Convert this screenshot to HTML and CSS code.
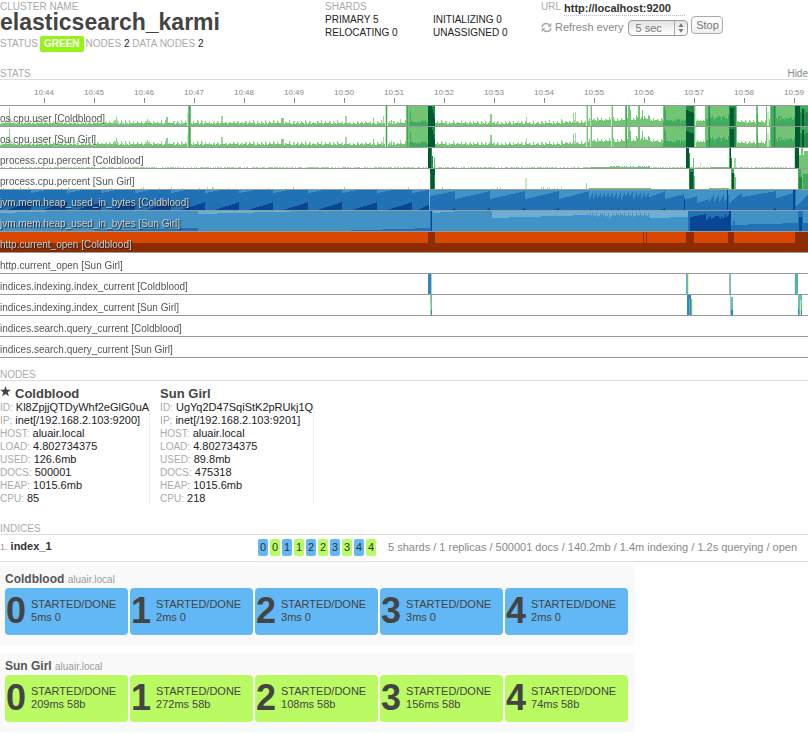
FILE: index.html
```html
<!DOCTYPE html>
<html lang="en">
<head>
<meta charset="utf-8">
<title>elasticsearch_karmi</title>
<link rel="stylesheet" href="styles.css">
</head>
<body>
<header class="top">
  <div class="cluster">
    <p class="label">CLUSTER NAME</p>
    <h1>elasticsearch_karmi</h1>
    <p class="status label"><span>STATUS</span><strong class="pill">GREEN</strong><span>NODES <b>2</b> DATA NODES <b>2</b></span></p>
  </div>
  <div class="shard-summary">
    <p class="label">SHARDS</p>
    <ul class="counts">
      <li>PRIMARY 5</li><li>INITIALIZING 0</li>
      <li>RELOCATING 0</li><li>UNASSIGNED 0</li>
    </ul>
  </div>
  <form class="controls">
    <div class="url"><label for="url" class="label">URL</label><input id="url" type="text" value="http://localhost:9200"></div>
    <div class="refresh">
      <svg class="refresh-icon" viewBox="0 0 11 11" aria-hidden="true"><path d="M1.2 5.2C1.5 2.8 3.2 1.5 5.3 1.5c1.300 0 2.300.5 3 1.300M9.800 5.800C9.500 8.200 7.800 9.500 5.700 9.500c-1.300 0-2.300-.5-3-1.300" fill="none" stroke="#aaa" stroke-width="1.500"/><path d="M10.300.8v3.900H6.400zM.7 10.200V6.300h3.900z" fill="#aaa"/></svg>
      <label for="every">Refresh every</label>
      <span class="select"><select id="every"><option>5 sec</option><option>10 sec</option><option>30 sec</option></select><svg viewBox="0 0 13 14" aria-hidden="true"><path d="M.5 0v14" stroke="#aaa"/><path d="M4.500 6 7 2.200 9.500 6zM4.500 8 7 11.800 9.500 8z" fill="#777"/></svg></span>
      <button type="button">Stop</button>
    </div>
  </form>
</header>

<section class="stats">
  <div class="bar"><h2>STATS</h2><a href="#stats">Hide</a></div>
  <div class="chart" id="stats">
    <ol class="axis">
      <li>10:44</li><li>10:45</li><li>10:46</li><li>10:47</li><li>10:48</li><li>10:49</li><li>10:50</li><li>10:51</li><li>10:52</li><li>10:53</li><li>10:54</li><li>10:55</li><li>10:56</li><li>10:57</li><li>10:58</li><li>10:59</li>
    </ol>
    <div class="horizon"><canvas width="808" height="20" data-metric="cpu"></canvas><span>os.cpu.user [Coldblood]</span></div>
    <div class="horizon"><canvas width="808" height="20" data-metric="cpu"></canvas><span>os.cpu.user [Sun Girl]</span></div>
    <div class="horizon"><canvas width="808" height="20" data-metric="process1"></canvas><span>process.cpu.percent [Coldblood]</span></div>
    <div class="horizon"><canvas width="808" height="20" data-metric="process2"></canvas><span>process.cpu.percent [Sun Girl]</span></div>
    <div class="horizon inverse"><canvas width="808" height="20" data-metric="heap1"></canvas><span>jvm.mem.heap_used_in_bytes [Coldblood]</span></div>
    <div class="horizon inverse"><canvas width="808" height="20" data-metric="heap2"></canvas><span>jvm.mem.heap_used_in_bytes [Sun Girl]</span></div>
    <div class="horizon inverse"><canvas width="808" height="20" data-metric="http"></canvas><span>http.current_open [Coldblood]</span></div>
    <div class="horizon"><canvas width="808" height="20"></canvas><span>http.current_open [Sun Girl]</span></div>
    <div class="horizon"><canvas width="808" height="20" data-metric="indexing1"></canvas><span>indices.indexing.index_current [Coldblood]</span></div>
    <div class="horizon"><canvas width="808" height="20" data-metric="indexing2"></canvas><span>indices.indexing.index_current [Sun Girl]</span></div>
    <div class="horizon"><canvas width="808" height="20"></canvas><span>indices.search.query_current [Coldblood]</span></div>
    <div class="horizon"><canvas width="808" height="20"></canvas><span>indices.search.query_current [Sun Girl]</span></div>
  </div>
</section>

<section class="nodes">
  <div class="bar"><h2>NODES</h2></div>
  <div class="node-list">
    <article class="node">
      <h3><svg class="star" viewBox="0 0 11 11" aria-hidden="true"><path d="M5.500 0 6.800 3.800H11L7.700 6.300 8.900 10.300 5.500 7.900 2.100 10.300 3.300 6.300 0 3.800H4.200z" fill="#444"/></svg>Coldblood</h3>
      <dl>
        <div><dt>ID:</dt> <dd>Kl8ZpjjQTDyWhf2eGlG0uA</dd></div>
        <div><dt>IP:</dt> <dd>inet[/192.168.2.103:9200]</dd></div>
        <div><dt>HOST:</dt> <dd>aluair.local</dd></div>
        <div><dt>LOAD:</dt> <dd>4.802734375</dd></div>
        <div><dt>USED:</dt> <dd>126.6mb</dd></div>
        <div><dt>DOCS:</dt> <dd>500001</dd></div>
        <div><dt>HEAP:</dt> <dd>1015.6mb</dd></div>
        <div><dt>CPU:</dt> <dd>85</dd></div>
      </dl>
    </article>
    <article class="node">
      <h3>Sun Girl</h3>
      <dl>
        <div><dt>ID:</dt> <dd>UgYq2D47SqiStK2pRUkj1Q</dd></div>
        <div><dt>IP:</dt> <dd>inet[/192.168.2.103:9201]</dd></div>
        <div><dt>HOST:</dt> <dd>aluair.local</dd></div>
        <div><dt>LOAD:</dt> <dd>4.802734375</dd></div>
        <div><dt>USED:</dt> <dd>89.8mb</dd></div>
        <div><dt>DOCS:</dt> <dd>475318</dd></div>
        <div><dt>HEAP:</dt> <dd>1015.6mb</dd></div>
        <div><dt>CPU:</dt> <dd>218</dd></div>
      </dl>
    </article>
  </div>
</section>

<section class="indices">
  <div class="bar"><h2>INDICES</h2></div>
  <div class="index">
    <h3><small>1.</small> index_1</h3>
    <ul class="mini">
      <li class="blue">0</li><li class="green">0</li><li class="blue">1</li><li class="green">1</li><li class="blue">2</li><li class="green">2</li><li class="blue">3</li><li class="green">3</li><li class="blue">4</li><li class="green">4</li>
    </ul>
    <p>5 shards / 1 replicas / 500001 docs / 140.2mb / 1.4m indexing / 1.2s querying / open</p>
  </div>
  <div class="panel">
    <h4>Coldblood <small>aluair.local</small></h4>
    <ul class="cards">
      <li class="blue"><b>0</b><p>STARTED/DONE<br>5ms 0</p></li>
      <li class="blue"><b>1</b><p>STARTED/DONE<br>2ms 0</p></li>
      <li class="blue"><b>2</b><p>STARTED/DONE<br>3ms 0</p></li>
      <li class="blue"><b>3</b><p>STARTED/DONE<br>3ms 0</p></li>
      <li class="blue"><b>4</b><p>STARTED/DONE<br>2ms 0</p></li>
    </ul>
  </div>
  <div class="panel">
    <h4>Sun Girl <small>aluair.local</small></h4>
    <ul class="cards">
      <li class="green"><b>0</b><p>STARTED/DONE<br>209ms 58b</p></li>
      <li class="green"><b>1</b><p>STARTED/DONE<br>272ms 58b</p></li>
      <li class="green"><b>2</b><p>STARTED/DONE<br>108ms 58b</p></li>
      <li class="green"><b>3</b><p>STARTED/DONE<br>156ms 58b</p></li>
      <li class="green"><b>4</b><p>STARTED/DONE<br>74ms 58b</p></li>
    </ul>
  </div>
</section>
<script src="charts.js"></script>
</body>
</html>
```
FILE: styles.css
```css
* { box-sizing: border-box; margin: 0; padding: 0; }
body {
  font: 11px/13px "Liberation Sans", Arial, sans-serif;
  color: #222;
  background: #fff;
  overflow-x: hidden;
}
ul, ol { list-style: none; }
.label { font-size: 10px; color: #aaa; }

.top {
  display: grid;
  grid-template-columns: 325fr 216fr 267fr;
  height: 52px;
}
h1 { font-size: 23px; line-height: 18px; color: #444; }
.status { display: flex; gap: 2px; margin-top: 5px; line-height: 16px; }
.status b { font-weight: normal; color: #222; }
.pill { padding: 0 4px; border-radius: 2px; background: #97f218; color: #fff; }
.counts { display: grid; grid-template-columns: 1fr 1fr; font-size: 10px; }

.url { display: flex; gap: 3px; height: 16px; }
.url input {
  width: 121px;
  border: 0;
  border-bottom: 1px dotted #bbb;
  background: none;
  font: bold 11px/14px "Liberation Sans", Arial, sans-serif;
  color: #333;
}
.refresh { display: flex; align-items: flex-start; color: #888; }
.refresh-icon { width: 11px; height: 11px; margin: 6px 3px 0 0; }
.refresh label { margin: 5px 5px 0 0; }
.select {
  display: flex;
  width: 60px;
  height: 16px;
  margin: 4px 3px 0 0;
  border: 1px solid #999;
  border-radius: 4px;
  background: linear-gradient(#e2e2e2, #fff);
}
.select select {
  flex: 1;
  min-width: 0;
  padding-left: 6px;
  border: 0;
  background: none;
  appearance: none;
  font: 11px/13px "Liberation Sans", Arial, sans-serif;
  color: #777;
}
.select svg { width: 13px; height: 14px; }
.refresh button {
  width: 32px;
  height: 18px;
  padding-top: 1px;
  border: 1px solid #aaa;
  border-radius: 4px;
  background: linear-gradient(#fff, #f0f0f0);
  font: 11px/13px "Liberation Sans", Arial, sans-serif;
  color: #777;
}

.bar {
  display: flex;
  justify-content: space-between;
  height: 13px;
  border-bottom: 1px solid #ddd;
  line-height: 14px;
}
.bar h2, .bar a { font-size: 10px; font-weight: normal; color: #aaa; text-decoration: none; }
.bar a { color: #888; }
.stats { margin-top: 15px; }
.chart { overflow: hidden; }
.axis {
  display: grid;
  grid-template-columns: repeat(16, 1fr);
  height: 25px;
  margin: 0 -11px 0 19px;
  padding-top: 8px;
  font-size: 8px;
  line-height: 10px;
  text-align: center;
  color: #888;
}
.axis li::after { content: ""; display: block; width: 1px; height: 5px; margin: 0 auto; background: #888; }
.horizon { position: relative; height: 21px; border-top: 1px solid #999; }
.horizon:last-child { height: 22px; border-bottom: 1px solid #999; }
.horizon canvas { display: block; width: 100%; height: 20px; image-rendering: pixelated; }
.horizon span {
  position: absolute;
  left: 0;
  top: 6px;
  font-size: 10px;
  color: #555;
  text-shadow: 0 1px 0 rgba(255, 255, 255, .5);
}
.horizon.inverse span { color: #ccc; text-shadow: 1px 1px 1px #222; }

.nodes { margin-top: 10px; }
.node-list { display: flex; gap: 10px; padding-top: 5px; }
.node h3 { display: flex; gap: 4px; height: 15px; font-size: 13px; line-height: 15px; color: #444; }
.star { width: 11px; height: 11px; }
.node dl { min-width: 150px; border-right: 1px solid #eee; }
.node dt, .node dd { display: inline; }
.node dt { font-size: 10px; color: #aaa; }

.indices { margin-top: 17px; }
.index {
  display: grid;
  grid-template-columns: 258fr 130fr 420fr;
  align-items: center;
  height: 27px;
  padding-bottom: 2px;
  margin-bottom: 4px;
  border-bottom: 1px solid #ddd;
  white-space: nowrap;
}
.index h3 { font-size: 11px; color: #333; }
.index small { font-size: 9px; font-weight: normal; color: #999; }
.index p { color: #888; }
.mini { display: flex; gap: 2px; }
.mini li { width: 10px; border-radius: 2px; line-height: 17px; text-align: center; color: #333; }
.blue { background: #62b7f5; }
.green { background: #bafa62; }
.panel { max-width: 635px; padding: 5px 7px 10px 5px; border-radius: 4px; background: #f9f9f9; }
.panel + .panel { margin-top: 8px; }
.panel h4 { font-size: 12px; line-height: 17px; color: #555; }
.panel small { font-size: 10px; font-weight: normal; color: #999; }
.cards { display: grid; grid-template-columns: repeat(5, 1fr); gap: 2px; }
.cards li { display: flex; align-items: center; gap: 5px; height: 47px; padding: 0 0 2px 1px; border-radius: 4px; color: #444; }
.cards b { font-size: 36px; line-height: 45px; }
```
FILE: charts.js
```js
const GREEN = { pale: '#c7e9c0', light: '#74c476', mid: '#41ab5d', dark: '#238b45', deep: '#005a32' };
const BLUE = { pale: '#6baed6', light: '#4292c6', mid: '#2171b5', deep: '#084594' };
const H = 20;

// Repeatable pseudo-random sequence, 0..1.
function sequence(seed) {
  return () => (seed = (seed * 16807) % 2147483647) / 2147483647;
}

// Filled column group standing on the base line.
function rise(c, x, w, h, color) {
  c.fillStyle = color;
  c.fillRect(x, H - h, w, h);
}

// Straight-edged area between two x values, measured from base or top.
function area(c, x0, h0, x1, h1, color, top) {
  c.fillStyle = color;
  for (let x = x0; x < x1; x++) {
    const h = Math.round(h0 + (h1 - h0) * (x - x0) / (x1 - x0));
    c.fillRect(x, top ? 0 : H - h, 1, h);
  }
}

function noise(c, x0, x1, base, spread, color, rnd) {
  c.fillStyle = color;
  for (let x = x0; x < x1; x++) {
    const h = Math.round(base + spread * rnd());
    c.fillRect(x, H - h, 1, h);
  }
}

const draw = {
  cpu(c) {
    const r = sequence(77);
    for (let x = 0; x < 808; x++) {
      const busy = x > 585 && x < 663 ? 3 : x > 560 ? 1 : 0;
      if (x % 4 === 1) rise(c, x, 1, 4 + busy + Math.round(r() * 2), '#8bce8b');
      if (x % 4 === 2) rise(c, x, 1, 3 + busy + Math.round(r() * 2), '#b4e0b0');
      rise(c, x, 1, 2 + busy + Math.round(r() * 1.3), GREEN.light);
    }
    [[9, 1, 18], [8, 3, 8], [116, 1, 9], [114, 4, 6], [147, 1, 7], [145, 5, 5], [166, 2, 9], [221, 2, 10],
      [281, 3, 8], [345, 2, 10], [373, 1, 8], [383, 1, 10], [391, 1, 6], [400, 1, 7], [490, 2, 12], [526, 1, 9],
      [573, 1, 13], [575, 1, 14]].forEach(([x, w, h], i) => {
      rise(c, x, w, h, i % 2 ? '#a1d99b' : '#8bce8b');
      rise(c, x, w, 3, GREEN.light);
    });
    rise(c, 187, 1, 13, GREEN.pale); rise(c, 188, 3, 20, GREEN.light); rise(c, 189, 1, 20, GREEN.mid);
    rise(c, 385, 3, 20, GREEN.pale); rise(c, 386, 1, 20, GREEN.mid);
    rise(c, 406, 22, 20, GREEN.light); noise(c, 409, 428, 3, 3, GREEN.mid, r); rise(c, 407, 1, 20, GREEN.mid); rise(c, 410, 1, 15, GREEN.mid);
    rise(c, 428, 7, 20, GREEN.deep); area(c, 432, 3, 435, 16, GREEN.dark, true);
    [586, 590, 611].forEach(x => { rise(c, x, 2, 20, GREEN.pale); rise(c, x + 1, 1, 20, GREEN.light); });
    noise(c, 625, 631, 8, 8, GREEN.light, r); rise(c, 625, 1, 20, GREEN.light); rise(c, 628, 2, 20, GREEN.light); rise(c, 626, 1, 20, GREEN.mid);
    noise(c, 634, 650, 6, 5, GREEN.light, r); rise(c, 638, 2, 20, GREEN.light); rise(c, 642, 1, 16, GREEN.light);
    rise(c, 663, 23, 20, GREEN.light); noise(c, 663, 686, 4, 3, GREEN.mid, r); rise(c, 664, 1, 20, GREEN.mid); rise(c, 665, 1, 16, GREEN.mid);
    rise(c, 686, 8, 20, GREEN.deep); area(c, 686, 4, 694, 7, GREEN.dark, true); rise(c, 694, 1, 20, GREEN.light); rise(c, 695, 1, 20, GREEN.pale);
    noise(c, 696, 705, 4, 2, GREEN.light, r);
    rise(c, 705, 24, 20, GREEN.light); noise(c, 706, 729, 6, 5, GREEN.mid, r); rise(c, 708, 2, 20, GREEN.mid); rise(c, 709, 1, 20, GREEN.dark);
    rise(c, 729, 7, 20, GREEN.dark); rise(c, 730, 4, 18, GREEN.deep); rise(c, 736, 1, 20, GREEN.light);
    rise(c, 756, 2, 20, GREEN.light); rise(c, 757, 1, 12, GREEN.mid); rise(c, 766, 1, 20, GREEN.light); rise(c, 767, 2, 14, GREEN.pale);
    rise(c, 770, 25, 20, GREEN.light); noise(c, 776, 795, 5, 5, GREEN.mid, r); rise(c, 771, 5, 20, GREEN.mid); rise(c, 774, 1, 20, GREEN.dark);
    rise(c, 795, 5, 20, GREEN.deep); rise(c, 800, 8, 20, GREEN.mid); noise(c, 800, 808, 12, 6, GREEN.dark, r); rise(c, 802, 2, 17, GREEN.deep);
  },
  process1(c) {
    const r = sequence(5);
    for (let x = 0; x < 808; x++) if (r() > 0.4) rise(c, x, 1, 1, '#a1d99b');
    rise(c, 590, 60, 1, GREEN.light); noise(c, 610, 650, 1, 1, GREEN.light, r);
    rise(c, 431, 1, 20, GREEN.dark); rise(c, 432, 1, 12, GREEN.dark);
    rise(c, 428, 3, 20, GREEN.deep); rise(c, 434, 1, 11, GREEN.light); rise(c, 435, 1, 4, GREEN.pale);
    rise(c, 686, 3, 20, GREEN.deep); rise(c, 689, 1, 15, GREEN.dark); rise(c, 693, 1, 10, GREEN.light); rise(c, 700, 1, 6, GREEN.pale);
    rise(c, 710, 20, 1, GREEN.light);
    rise(c, 729, 1, 20, GREEN.mid); rise(c, 730, 1, 20, GREEN.deep); rise(c, 731, 1, 10, GREEN.dark); rise(c, 734, 2, 10, '#a1d99b');
    rise(c, 794, 1, 20, GREEN.pale); rise(c, 795, 4, 20, GREEN.deep); rise(c, 799, 9, 13, GREEN.light); rise(c, 801, 2, 20, GREEN.light); rise(c, 804, 4, 17, GREEN.light);
  },
  process2(c) {
    const r = sequence(15);
    for (let x = 0; x < 560; x++) if (r() > 0.93) rise(c, x, 1, 1 + Math.round(r()), '#a1d99b');
    rise(c, 430, 5, 20, GREEN.deep); rise(c, 430, 1, 16, GREEN.dark); rise(c, 434, 1, 14, GREEN.dark);
    rise(c, 525, 2, 11, GREEN.pale); rise(c, 561, 1, 3, GREEN.pale); rise(c, 586, 1, 6, '#a1d99b');
    rise(c, 589, 62, 1, GREEN.light);
    rise(c, 689, 5, 20, GREEN.dark); rise(c, 690, 3, 17, GREEN.deep); rise(c, 694, 1, 13, GREEN.light);
    rise(c, 709, 20, 1, GREEN.light);
    rise(c, 731, 3, 20, GREEN.mid); rise(c, 732, 2, 16, GREEN.deep); rise(c, 734, 1, 15, GREEN.light); rise(c, 735, 1, 12, GREEN.light);
    rise(c, 798, 10, 20, GREEN.light); rise(c, 798, 3, 20, GREEN.mid); rise(c, 799, 3, 12, GREEN.dark); rise(c, 803, 5, 15, GREEN.mid);
  },
  heap1(c) {
    const r = sequence(31);
    rise(c, 0, 808, H, BLUE.mid);
    [31, 67, 101, 135, 171, 205, 239, 273, 308, 342, 377, 412].forEach(x => {
      area(c, Math.max(0, x - 25), 0, x, 8, BLUE.deep);
      area(c, x, 3, x + 15, 0, BLUE.light, true);
    });
    area(c, 418, 0, 429, 6, BLUE.deep);
    rise(c, 429, 1, 20, BLUE.pale);
    [[430, 6, 455, 1], [455, 9, 490, 1], [490, 9, 525, 1], [525, 9, 559, 1], [559, 9, 589, 1], [649, 7, 665, 1],
      [665, 9, 684, 4], [684, 10, 697, 6], [697, 13, 709, 9], [729, 13, 742, 2], [742, 7, 776, 1], [776, 8, 793, 3],
      [796, 16, 808, 4]].forEach(([a, h, b, k]) => area(c, a, h, b, k, BLUE.light, true));
    for (let x = 589; x < 649; x += 4) area(c, x, 9 - Math.round(r() * 3), x + 4, 1, BLUE.light, true);
    for (let x = 709; x < 727; x += 5) area(c, x, 12, x + 5, 3, BLUE.light, true);
    [455, 490, 525, 559, 665, 776].forEach(x => area(c, x - 5, 0, x, 2, BLUE.deep));
    for (let x = 590; x < 640; x += 7) rise(c, x, 1, 1, BLUE.deep);
    rise(c, 684, 1, 12, BLUE.deep); rise(c, 727, 1, 20, BLUE.deep); rise(c, 793, 2, 20, BLUE.deep);
  },
  heap2(c) {
    const r = sequence(9);
    rise(c, 0, 808, H, BLUE.light);
    area(c, 0, 2, 60, 0, BLUE.pale, true);
    area(c, 198, 3, 308, 0, BLUE.pale, true);
    area(c, 433, 2, 460, 0, BLUE.pale, true);
    area(c, 492, 7, 589, 4, BLUE.pale, true);
    for (let x = 589; x < 650; x += 4) {
      area(c, x, 4 + Math.round(r() * 3), x + 4, 1, BLUE.pale, true);
      area(c, x + 1, 3, x + 3, 6, BLUE.pale, true);
    }
    area(c, 650, 7, 688, 6, BLUE.pale, true);
    area(c, 78, 0, 198, 3, BLUE.mid); area(c, 335, 0, 431, 3, BLUE.mid);
    rise(c, 430, 2, 20, BLUE.mid); rise(c, 431, 1, 20, BLUE.deep);
    rise(c, 688, 43, 20, BLUE.mid); area(c, 690, 14, 706, 17, BLUE.deep); noise(c, 706, 729, 11, 5, BLUE.deep, r); rise(c, 729, 2, 20, BLUE.deep);
    area(c, 731, 6, 798, 8, BLUE.mid); rise(c, 733, 2, 10, BLUE.mid);
    rise(c, 798, 5, 20, BLUE.mid); rise(c, 799, 3, 14, BLUE.deep); rise(c, 803, 5, 8, BLUE.mid);
  },
  http(c) {
    rise(c, 0, 808, H, '#d94801');
    rise(c, 0, 808, 9, '#8c2d04');
    [[428, 7], [643, 1], [646, 1], [686, 8], [728, 6], [795, 13]].forEach(([x, w]) => rise(c, x, w, H, '#8c2d04'));
  },
  indexing1(c) {
    rise(c, 428, 3, 20, '#3288bd'); rise(c, 431, 1, 20, '#a6cfe4');
    rise(c, 686, 2, 20, '#66b5c0'); rise(c, 688, 1, 20, '#e6f598');
    rise(c, 729, 1, 20, '#8cc7b9'); rise(c, 730, 1, 20, '#80b3d3');
    rise(c, 795, 3, 20, '#50b3a9'); rise(c, 794, 1, 20, '#d9eef0');
  },
  indexing2(c) {
    rise(c, 430, 1, 20, '#8ed1a4'); rise(c, 430, 1, 13, '#b9e19c'); rise(c, 431, 1, 20, '#66c2a5'); rise(c, 431, 1, 5, '#3288bd');
    rise(c, 687, 4, 20, '#3288bd'); rise(c, 689, 1, 16, '#66a5bd'); rise(c, 691, 1, 16, '#66c2a5'); rise(c, 692, 1, 16, '#e6f598');
    rise(c, 730, 1, 20, '#9ac6df'); rise(c, 731, 2, 18, '#66c2a5'); rise(c, 731, 2, 5, '#3288bd');
    rise(c, 798, 4, 20, '#66c2a5'); rise(c, 800, 1, 15, '#d0e69a'); rise(c, 798, 1, 6, '#3288bd'); rise(c, 801, 1, 5, '#3288bd');
  }
};

document.querySelectorAll('canvas[data-metric]').forEach(el => draw[el.dataset.metric](el.getContext('2d')));
```
